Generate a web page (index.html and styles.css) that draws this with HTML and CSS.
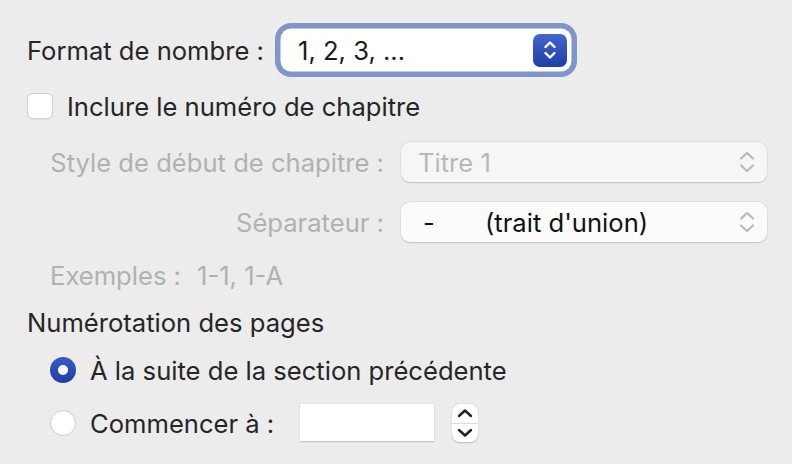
FILE: index.html
```html
<!DOCTYPE html>
<html lang="fr">
<head>
<meta charset="utf-8">
<link rel="stylesheet" href="styles.css">
</head>
<body>
<div class="panel">
  <div class="row-format">
    <span class="label">Format de nombre :</span>
    <div class="popup-focus">
      <span class="popup-text">1, 2, 3, ...</span>
      <span class="blue-btn">
        <svg width="12" height="20" viewBox="0 0 12 20"><path d="M1.5 7 L6 2.5 L10.5 7 M1.5 13 L6 17.5 L10.5 13" fill="none" stroke="#fff" stroke-width="2.4" stroke-linecap="round" stroke-linejoin="round"/></svg>
      </span>
    </div>
  </div>

  <div class="row-check">
    <span class="checkbox"></span>
    <span class="label">Inclure le numéro de chapitre</span>
  </div>

  <div class="chapter-grid">
    <span class="dlabel">Style de début de chapitre :</span>
    <div class="popup popup-disabled">
      <span class="ptext muted">Titre 1</span>
      <svg class="chev" width="16" height="22" viewBox="0 0 16 22"><path d="M2 7.5 L8 2 L14 7.5 M2 14.5 L8 20 L14 14.5" fill="none" stroke="#b9b9b9" stroke-width="2.2" stroke-linecap="round" stroke-linejoin="round"/></svg>
    </div>
    <span class="dlabel">Séparateur :</span>
    <div class="popup">
      <span class="ptext"><span class="dash">-</span>(trait d'union)</span>
      <svg class="chev" width="16" height="22" viewBox="0 0 16 22"><path d="M2 7.5 L8 2 L14 7.5 M2 14.5 L8 20 L14 14.5" fill="none" stroke="#b9b9b9" stroke-width="2.2" stroke-linecap="round" stroke-linejoin="round"/></svg>
    </div>
  </div>

  <div class="row-examples">
    <span class="dtext">Exemples :</span>
    <span class="dtext ex-val">1-1, 1-A</span>
  </div>

  <div class="heading">Numérotation des pages</div>

  <div class="row-radio">
    <span class="radio radio-on"><span class="dot"></span></span>
    <span class="label">À la suite de la section précédente</span>
  </div>

  <div class="row-radio row-start">
    <span class="radio"></span>
    <span class="label">Commencer à :</span>
    <span class="num-input"></span>
    <span class="stepper">
      <span class="step-half">
        <svg width="16" height="10" viewBox="0 0 16 10"><path d="M2 8 L8 2.5 L14 8" fill="none" stroke="#1e1e1e" stroke-width="2.4" stroke-linecap="round" stroke-linejoin="round"/></svg>
      </span>
      <span class="step-half step-bottom">
        <svg width="16" height="10" viewBox="0 0 16 10"><path d="M2 2 L8 7.5 L14 2" fill="none" stroke="#1e1e1e" stroke-width="2.4" stroke-linecap="round" stroke-linejoin="round"/></svg>
      </span>
    </span>
  </div>
</div>
</body>
</html>
```

FILE: styles.css
```css
html, body {
  margin: 0;
  padding: 0;
  background: #ececec;
}
body {
  font-family: Inter, "Liberation Sans", sans-serif;
  font-size: 25.6px;
  color: #262626;
  width: 792px;
  height: 464px;
  overflow: hidden;
}
.panel {
  padding-left: 27px;
  padding-top: 30px;
}
.label {
  white-space: nowrap;
}
.row-format {
  display: flex;
  align-items: center;
  height: 40px;
}
.row-format .label {
  width: 255px;
  flex-shrink: 0;
}
.popup-focus {
  width: 288px;
  height: 40px;
  box-sizing: border-box;
  background: #fff;
  border-radius: 9px;
  box-shadow: 0 0 0 1.5px #fff, 0 0 0 7px #7f96cc;
  display: flex;
  align-items: center;
  justify-content: space-between;
  padding: 0 3px 0 16px;
}
.popup-text {
  color: #1c1c1c;
}
.blue-btn {
  width: 34px;
  height: 33px;
  border-radius: 7px;
  background: linear-gradient(#4465cc, #1f3ea6);
  display: flex;
  align-items: center;
  justify-content: center;
}
.row-check {
  display: flex;
  align-items: center;
  margin-top: 23px;
  height: 26px;
}
.checkbox {
  width: 24px;
  height: 24px;
  border: 1px solid #d2d2d2;
  border-radius: 6px;
  background: #fff;
  margin-right: 14px;
  box-shadow: 0 0.5px 1px rgba(0,0,0,0.06);
  flex-shrink: 0;
}
.chapter-grid {
  display: grid;
  grid-template-columns: 357px 366px;
  column-gap: 17px;
  row-gap: 20px;
  margin-top: 23px;
  align-items: center;
}
.dlabel {
  text-align: right;
  color: #b1b1b1;
  white-space: nowrap;
}
.popup {
  height: 40px;
  box-sizing: border-box;
  border-radius: 9px;
  background: #fbfbfb;
  box-shadow: 0 0.5px 1.5px rgba(0,0,0,0.16), 0 0 0 0.5px rgba(0,0,0,0.05);
  display: flex;
  align-items: center;
  justify-content: space-between;
  padding: 0 12px 0 17px;
}
.popup-disabled {
  background: #f6f6f6;
}
.ptext {
  color: #111;
  white-space: nowrap;
}
.ptext.muted {
  color: #b8b8b8;
}
.dash {
  display: inline-block;
  width: 67px;
  padding-left: 5px;
  box-sizing: border-box;
}
.row-examples {
  display: flex;
  align-items: center;
  height: 24px;
  margin-top: 21px;
  padding-left: 23px;
}
.dtext {
  color: #b1b1b1;
  white-space: nowrap;
}
.ex-val {
  margin-left: 16px;
}
.heading {
  height: 24px;
  line-height: 24px;
  margin-top: 24px;
}
.row-radio {
  display: flex;
  align-items: center;
  height: 26px;
  margin-top: 22px;
  padding-left: 23px;
}
.radio {
  width: 26px;
  height: 26px;
  box-sizing: border-box;
  border-radius: 50%;
  background: #fff;
  border: 1px solid #d0d0d0;
  margin-right: 14px;
  display: flex;
  align-items: center;
  justify-content: center;
  flex-shrink: 0;
}
.radio-on {
  border: none;
  background: linear-gradient(#3a5ac5, #1f3ea6);
}
.dot {
  width: 10px;
  height: 10px;
  border-radius: 50%;
  background: #fff;
}
.row-start {
  height: 40px;
  margin-top: 20px;
}
.row-start .label {
  margin-right: 26px;
}
.num-input {
  width: 134px;
  height: 38px;
  background: #fff;
  box-sizing: border-box;
  border-bottom: 1px solid #c8c8c8;
  box-shadow: 0 0 0 0.5px rgba(0,0,0,0.08);
  margin-right: 18px;
  flex-shrink: 0;
}
.stepper {
  width: 26px;
  height: 38px;
  border-radius: 8px;
  background: #fff;
  box-shadow: 0 0.5px 1.5px rgba(0,0,0,0.22);
  display: flex;
  flex-direction: column;
  flex-shrink: 0;
}
.step-half {
  flex: 1;
  display: flex;
  align-items: center;
  justify-content: center;
}
.step-bottom {
  border-top: 1px solid #dcdcdc;
}
```
